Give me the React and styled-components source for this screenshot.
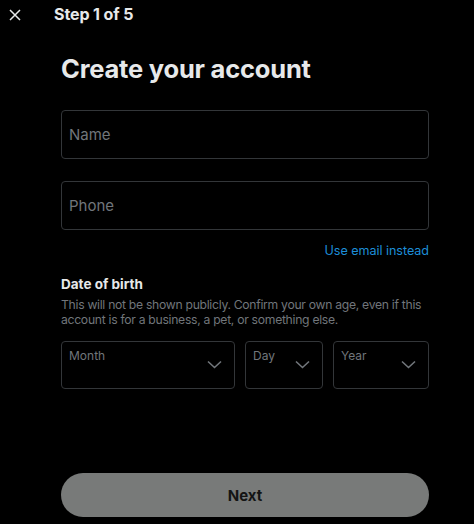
import React from 'react'
import styled, { createGlobalStyle } from 'styled-components'

const Global = createGlobalStyle`
  html, body {
    margin: 0;
    padding: 0;
    background: #000;
  }
  body {
    font-family: Inter, 'Liberation Sans', Arial, sans-serif;
    color: #e7e9ea;
  }
  * {
    box-sizing: border-box;
  }
`

const Page = styled.div`
  width: 474px;
  height: 524px;
  background: #000;
  display: flex;
  flex-direction: column;
`

const TopBar = styled.div`
  height: 28px;
  display: flex;
  align-items: center;
  padding: 0 0 0 7px;
`

const CloseButton = styled.button`
  width: 16px;
  height: 16px;
  padding: 0;
  border: 0;
  background: transparent;
  display: flex;
  align-items: center;
  justify-content: center;
  margin-top: 1px;

  svg {
    width: 14px;
    height: 14px;
  }
`

const StepTitle = styled.div`
  margin-left: 31px;
  font-size: 16px;
  font-weight: 700;
  color: #e7e9ea;
  letter-spacing: -0.1px;
`

const Body = styled.div`
  flex: 1;
  display: flex;
  flex-direction: column;
  padding: 0 45px 0 61px;
`

const Heading = styled.h1`
  margin: 25px 0 0 0;
  font-size: 25.5px;
  line-height: 32px;
  font-weight: 700;
  color: #e7e9ea;
  letter-spacing: -0.2px;
`

const Field = styled.div`
  height: 49px;
  border: 1px solid #333639;
  border-radius: 4px;
  display: flex;
  align-items: center;
  padding: 0 7px;
  margin-top: ${p => p.$top}px;
  font-size: 15px;
  color: #71767b;
`

const LinkRow = styled.div`
  display: flex;
  justify-content: flex-end;
  margin-top: 12px;
`

const Link = styled.a`
  font-size: 12.6px;
  color: #1d8ed8;
  text-decoration: none;
  line-height: 17px;
  letter-spacing: -0.05px;
`

const SectionTitle = styled.div`
  margin-top: 17px;
  font-size: 13.5px;
  font-weight: 700;
  color: #e7e9ea;
  line-height: 17px;
`

const Hint = styled.p`
  margin: 5px 0 0 0;
  font-size: 12.2px;
  line-height: 14.5px;
  letter-spacing: -0.3px;
  color: #71767b;
`

const SelectRow = styled.div`
  display: grid;
  grid-template-columns: 174px 78px 96px;
  column-gap: 10px;
  margin-top: 14px;
`

const Select = styled.div`
  position: relative;
  height: 48px;
  border: 1px solid #333639;
  border-radius: 4px;
  padding: 6px 7px 0;
  font-size: 12px;
  color: #71767b;

  svg {
    position: absolute;
    right: 12px;
    top: 18px;
    width: 15px;
    height: 9px;
  }
`

const Footer = styled.div`
  margin-top: auto;
  padding-bottom: 7px;
`

const NextButton = styled.button`
  width: 100%;
  height: 44px;
  border: 0;
  border-radius: 22px;
  background: #787a79;
  color: #141414;
  font-family: inherit;
  font-size: 15px;
  font-weight: 700;
`

const Chevron = () => (
  <svg viewBox='0 0 15 9' fill='none'>
    <path d='M1 1.5 L7.5 7.5 L14 1.5' stroke='#71767b' strokeWidth='1.6' />
  </svg>
)

export default function App () {
  return (
    <Page>
      <Global />
      <TopBar>
        <CloseButton aria-label='Close'>
          <svg viewBox='0 0 14 14' fill='none'>
            <path d='M2 2 L12 12 M12 2 L2 12' stroke='#e7e9ea' strokeWidth='1.5' />
          </svg>
        </CloseButton>
        <StepTitle>Step 1 of 5</StepTitle>
      </TopBar>
      <Body>
        <Heading>Create your account</Heading>
        <Field $top={25}>Name</Field>
        <Field $top={22}>Phone</Field>
        <LinkRow>
          <Link>Use email instead</Link>
        </LinkRow>
        <SectionTitle>Date of birth</SectionTitle>
        <Hint>
          This will not be shown publicly. Confirm your own age, even if this account is for a business, a pet, or something else.
        </Hint>
        <SelectRow>
          <Select>Month<Chevron /></Select>
          <Select>Day<Chevron /></Select>
          <Select>Year<Chevron /></Select>
        </SelectRow>
        <Footer>
          <NextButton>Next</NextButton>
        </Footer>
      </Body>
    </Page>
  )
}
